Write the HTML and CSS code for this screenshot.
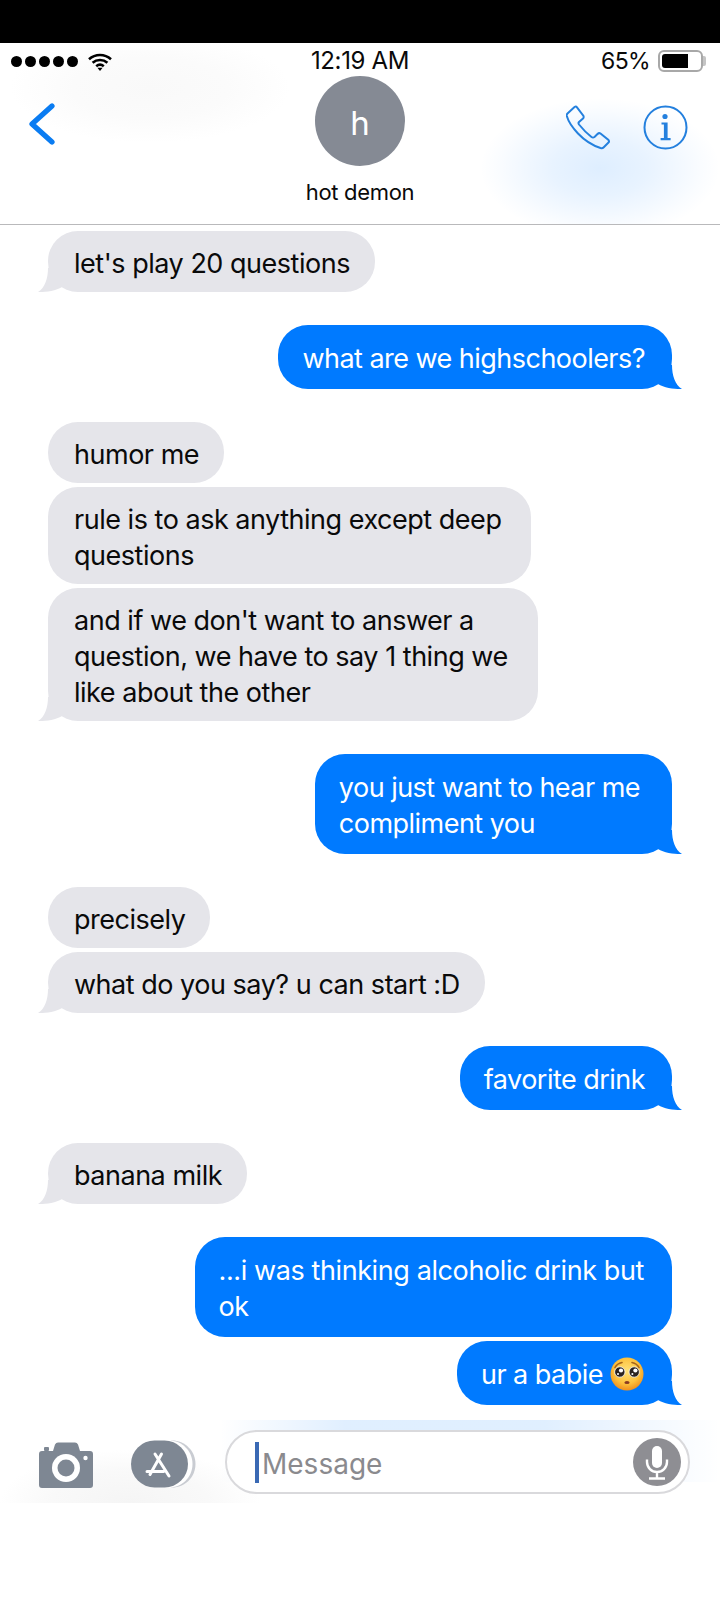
FILE: index.html
```html
<!DOCTYPE html>
<html lang="en">
<head>
<meta charset="utf-8">
<title>hot demon</title>
<link rel="stylesheet" href="styles.css">
</head>
<body>
<div class="page">
  <div class="notch-bar"></div>
  <header class="header">
    <div class="glow glow-grey"></div>
    <div class="glow glow-blue"></div>
    <div class="status">
      <div class="status-left">
        <span class="dots"><i></i><i></i><i></i><i></i><i></i></span>
        <svg class="wifi" viewBox="0 0 24 18" aria-hidden="true">
          <path d="M1 6.2C7.2 .6 16.8 .6 23 6.2" />
          <path d="M4.6 9.8C8.8 6.1 15.2 6.1 19.4 9.8" />
          <path d="M8.2 13.2C10.4 11.4 13.6 11.4 15.8 13.2" />
          <polygon class="wifi-tip" points="9.4,14.8 14.6,14.8 12,18" />
        </svg>
      </div>
      <div class="status-time">12:19 AM</div>
      <div class="status-right">
        <span class="pct">65%</span>
        <span class="battery"><span class="battery-fill"></span></span>
      </div>
    </div>
    <div class="nav">
      <svg class="back" viewBox="0 0 26 42" aria-hidden="true"><path d="M23 3 3 21 23 39" /></svg>
      <div class="contact">
        <div class="avatar">h</div>
        <div class="name">hot demon</div>
      </div>
      <div class="actions">
        <svg class="icon-line" viewBox="0 0 45 45" aria-hidden="true">
          <path d="M1.5 8.5 8.5 2Q10 1 11 2.3L17.5 11Q18 12.5 17 13.5L13 17Q12 18 13 19.5 19 27 25.5 32 27 33 28.5 32L31.5 29Q33 27.5 34.5 28.5L42.5 35Q43.5 36.5 42.5 37.5L37.5 42.5Q36.5 43.5 34.5 43 22 39 12 28.5 3 19 .8 11 .5 9.5 1.5 8.5Z" />
        </svg>
        <svg class="icon-line" viewBox="0 0 45 45" aria-hidden="true">
          <circle cx="22.5" cy="22.5" r="21" />
          <circle class="icon-solid" cx="22" cy="11.5" r="2.6" />
          <path class="icon-solid" d="M18.5 17.5H24.6V33H27.6V35.2H17.6V33H20.9V19.6H18.5Z" />
        </svg>
      </div>
    </div>
  </header>

  <main class="thread">
    <div class="bubble in tail">let's play 20 questions</div>
    <div class="bubble out tail far">what are we highschoolers?</div>
    <div class="bubble in far">humor me</div>
    <div class="bubble in multi">rule is to ask anything except deep<br>questions</div>
    <div class="bubble in tail multi">and if we don't want to answer a<br>question, we have to say 1 thing we<br>like about the other</div>
    <div class="bubble out tail far multi-wide">you just want to hear me<br>compliment you</div>
    <div class="bubble in far">precisely</div>
    <div class="bubble in tail">what do you say? u can start :D</div>
    <div class="bubble out tail far">favorite drink</div>
    <div class="bubble in tail far">banana milk</div>
    <div class="bubble out far multi">...i was thinking alcoholic drink but<br>ok</div>
    <div class="bubble out tail">ur a babie
      <svg class="emoji" viewBox="0 0 34 34" aria-hidden="true">
        <defs>
          <radialGradient id="face" cx="50%" cy="40%" r="60%">
            <stop offset="0" stop-color="#ffe27a" />
            <stop offset=".65" stop-color="#fdc13c" />
            <stop offset="1" stop-color="#ef8f1d" />
          </radialGradient>
        </defs>
        <circle cx="17" cy="17" r="16.5" fill="url(#face)" />
        <path class="brow" d="M5 10.5Q7 6.5 12 5.5M29 10.5Q27 6.5 22 5.5" />
        <circle class="eye" cx="9.8" cy="15" r="5.2" />
        <circle class="eye" cx="24.2" cy="15" r="5.2" />
        <circle class="shine" cx="11" cy="13.5" r="2.1" />
        <circle class="shine" cx="25.4" cy="13.5" r="2.1" />
        <circle class="shine" cx="8" cy="17" r="1" />
        <circle class="shine" cx="22.4" cy="17" r="1" />
        <ellipse class="mouth" cx="17" cy="25.5" rx="2.6" ry="1.6" />
      </svg>
    </div>
  </main>

  <footer class="composer">
    <div class="glow glow-strip"></div>
    <div class="glow glow-left"></div>
    <svg class="camera" viewBox="0 0 54 46" aria-hidden="true">
      <path class="tool" d="M3 9H14L16 2.5Q17 .5 19 .5H36Q38 .5 39 2.5L41 9H51Q54 9 54 12V43Q54 46 51 46H3Q0 46 0 43V12Q0 9 3 9Z" />
      <rect class="tool" x="5" y="5" width="5" height="4" rx="1" />
      <circle class="cut" cx="27" cy="26" r="14" />
      <circle class="tool" cx="27" cy="26" r="8.5" />
      <circle class="white" cx="46.5" cy="16" r="2.2" />
    </svg>
    <svg class="apps" viewBox="0 0 65 48" aria-hidden="true">
      <path class="apps-back" d="M40 .5H41C54 .5 64.5 11 64.5 24S54 47.5 41 47.5H40Z" />
      <path class="apps-gap" d="M38 .5C51 .5 61.5 11 61.5 24S51 47.5 38 47.5Z" />
      <rect class="tool" x="0" y=".5" width="57" height="47" rx="23.5" />
      <path class="apps-glyph" d="M30.5 14 19 34.5M24 14 38 36M16 31.5H32.5" />
    </svg>
    <div class="field">
      <span class="caret"></span>
      <span class="placeholder">Message</span>
      <svg class="mic" viewBox="0 0 48 48" aria-hidden="true">
        <circle class="mic-disc" cx="24" cy="24" r="24" />
        <rect class="white" x="19" y="8" width="10" height="22" rx="5" />
        <path class="mic-line" d="M14 21.5V24A10 10 0 0 0 34 24V21.5M24 34V40M16 40.5H32" />
      </svg>
    </div>
  </footer>
</div>
</body>
</html>
```
FILE: styles.css
```css
* { box-sizing: border-box; }

html, body { margin: 0; background: #fff; }

body {
  font-family: Inter, "Liberation Sans", sans-serif;
  color: #0a0a0a;
}

.page {
  width: 720px;
  height: 1600px;
  overflow: hidden;
  display: flex;
  flex-direction: column;
}

.notch-bar { height: 43px; background: #000; flex: none; }

.header {
  position: relative;
  height: 182px;
  flex: none;
  overflow: hidden;
  border-bottom: 1.5px solid #b9b9bb;
}

.glow { position: absolute; pointer-events: none; }

.glow-grey {
  left: 10px;
  top: -10px;
  width: 280px;
  height: 110px;
  background: radial-gradient(closest-side, #f9f9f9 0%, #fbfbfb 55%, rgba(255,255,255,0) 100%);
}

.glow-blue {
  left: 480px;
  top: 55px;
  width: 240px;
  height: 140px;
  background: radial-gradient(closest-side, rgba(0,122,255,.13) 0%, rgba(0,122,255,.09) 40%, rgba(0,122,255,.02) 85%, rgba(0,122,255,0) 100%);
}

.status {
  position: relative;
  height: 33px;
  padding: 0 11px;
  display: grid;
  grid-template-columns: 1fr auto 1fr;
  align-items: center;
  font-size: 24px;
  line-height: 28px;
  letter-spacing: -.35px;
}

.status-left { display: flex; align-items: center; gap: 10px; margin-top: 4px; }

.dots { display: flex; gap: 3px; }

.dots i { width: 11px; height: 11px; border-radius: 50%; background: #000; }

.wifi { width: 24px; height: 18px; }

.wifi path { fill: none; stroke: #000; stroke-width: 2.6; }

.wifi-tip { fill: #000; }

.status-time { text-align: center; margin-top: 3px; }

.status-right {
  display: flex;
  justify-content: flex-end;
  align-items: center;
  gap: 8px;
  margin: 3px 6px 0 0;
}

.pct { font-size: 23px; letter-spacing: -.6px; }

.battery {
  position: relative;
  width: 45px;
  height: 22px;
  border: 2px solid #a8a8a8;
  border-radius: 6px;
  padding: 2px;
  display: flex;
}

.battery::after {
  content: "";
  position: absolute;
  right: -5px;
  top: 4px;
  width: 3px;
  height: 10px;
  border-radius: 0 2px 2px 0;
  background: #c4c4c4;
}

.battery-fill { width: 26px; background: #000; border-radius: 3px 0 0 3px; }

.nav {
  position: relative;
  height: 148px;
  display: grid;
  grid-template-columns: 1fr auto 1fr;
}

.back {
  width: 26px;
  height: 42px;
  margin: 27px 0 0 29px;
}

.back path {
  fill: none;
  stroke: #0a7cf2;
  stroke-width: 5.2;
  stroke-linecap: round;
  stroke-linejoin: round;
}

.contact { display: flex; flex-direction: column; align-items: center; }

.avatar {
  width: 90px;
  height: 90px;
  border-radius: 50%;
  background: #858a94;
  color: #fff;
  font-size: 33px;
  line-height: 94px;
  text-align: center;
}

.name { margin-top: 13px; font-size: 22px; line-height: 26px; letter-spacing: -.3px; }

.actions {
  display: flex;
  justify-content: flex-end;
  gap: 32px;
  padding: 29px 32px 0 0;
}

.icon-line { width: 45px; height: 45px; }

.icon-line > path:not(.icon-solid),
.icon-line > circle:not(.icon-solid) {
  fill: none;
  stroke: #2480de;
  stroke-width: 2;
}

.icon-solid { fill: #2480de; }

.thread {
  height: 1195px;
  flex: none;
  padding-top: 6px;
  display: flex;
  flex-direction: column;
  align-items: flex-start;
  gap: 4px;
  font-size: 27px;
  line-height: 36px;
  letter-spacing: -.48px;
}

.bubble {
  position: relative;
  flex: none;
  border-radius: 30px;
}

.in {
  align-self: flex-start;
  margin-left: 48px;
  padding: 15px 25px 10px 26px;
  background: #e5e5ea;
}

.out {
  align-self: flex-end;
  margin-right: 48px;
  padding: 16px 27px 12px 24px;
  background: #007aff;
  color: #fff;
  letter-spacing: -.53px;
}

.in.multi { padding-right: 30px; }

.out.multi { padding-right: 28px; letter-spacing: -.4px; }

.multi-wide { padding-right: 32px; }

.far { margin-top: 29px; }

.tail::after {
  content: "";
  position: absolute;
  bottom: 0;
  width: 24px;
  height: 24px;
  background: inherit;
  clip-path: path("M14 0C14 10 17 20 24 24C17 24.2 6 23 0 19L0 0Z");
}

.out.tail::after { right: -10px; }

.in.tail::after { left: -10px; transform: scaleX(-1); }

.emoji {
  width: 34px;
  height: 34px;
  vertical-align: -7px;
  margin: 0 1px 0 0;
}

.emoji .brow { fill: none; stroke: #a5641a; stroke-width: 1.6; stroke-linecap: round; }
.emoji .eye { fill: #2b2320; stroke: #fff; stroke-width: .8; }
.emoji .shine { fill: #fff; }
.emoji .mouth { fill: #8a3b22; }

.composer {
  position: relative;
  height: 83px;
  flex: none;
  overflow: hidden;
  display: flex;
  align-items: flex-start;
  padding: 10px 30px 0 39px;
}

.glow-strip {
  left: 220px;
  top: 0;
  width: 500px;
  height: 62px;
  background: linear-gradient(90deg, rgba(0,122,255,0) 0%, rgba(0,122,255,.12) 25%, rgba(0,122,255,.12) 65%, rgba(0,122,255,0) 100%);
}

.glow-left {
  left: 0;
  top: 30px;
  width: 260px;
  height: 106px;
  background: radial-gradient(closest-side, #f5f5f5 0%, #f9f9f9 60%, rgba(255,255,255,0) 100%);
}

.camera { position: relative; width: 54px; height: 46px; margin-top: 12px; flex: none; }

.tool { fill: #7e8793; }
.cut, .white { fill: #fff; }

.apps { position: relative; width: 65px; height: 48px; margin: 10px 0 0 38px; flex: none; }

.apps-back { fill: #c9ccd2; }
.apps-gap { fill: #fff; }

.apps-glyph {
  fill: none;
  stroke: #fff;
  stroke-width: 3;
  stroke-linecap: round;
}

.field {
  position: relative;
  width: 465px;
  height: 64px;
  margin-left: 29px;
  padding: 0 7px 0 28px;
  border: 2.5px solid #d9d9dc;
  border-radius: 32px;
  background: #fff;
  display: flex;
  align-items: center;
  flex: none;
}

.caret { width: 4px; height: 41px; background: #3a69b4; flex: none; }

.placeholder {
  margin-left: 3px;
  padding-top: 3px;
  flex: 1;
  font-size: 28px;
  color: #8a8a8e;
}

.mic { width: 48px; height: 48px; flex: none; }

.mic-disc { fill: #8e8e93; }

.mic-line { fill: none; stroke: #fff; stroke-width: 2.4; }
```
